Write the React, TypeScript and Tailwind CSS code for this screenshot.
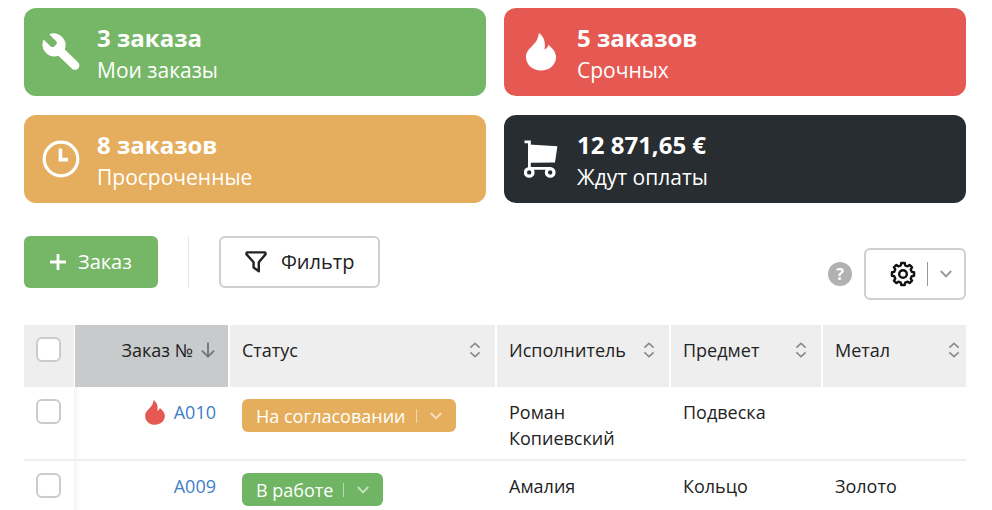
import React, { useState } from "react";
import clsx from "clsx";

interface Order {
  id: string;
  urgent: boolean;
  status: string;
  statusColor: string;
  assignee: string;
  item: string;
  metal: string;
}

const orders: Order[] = [
  {
    id: "A010",
    urgent: true,
    status: "На согласовании",
    statusColor: "bg-[#e5ae5c]",
    assignee: "Роман Копиевский",
    item: "Подвеска",
    metal: "",
  },
  {
    id: "A009",
    urgent: false,
    status: "В работе",
    statusColor: "bg-[#6fb563]",
    assignee: "Амалия",
    item: "Кольцо",
    metal: "Золото",
  },
];

function WrenchIcon() {
  return (
    <svg viewBox="0 0 38 38" className="size-[38px]" fill="currentColor">
      <path d="M7.2 1.2A12 12 0 0 1 22.8 16.4L36 29.2A4.2 4.2 0 0 1 30 35.7L16.4 22.8A12 12 0 0 1 1.6 6.4L8.8 13.4Q10.6 14.8 12.4 13.2L14.2 11.4Q15.6 9.8 14.2 8.2Z" />
    </svg>
  );
}

function FlameIcon({ className }: { className: string }) {
  return (
    <svg viewBox="0 0 30 38" className={className} fill="currentColor">
      <path d="M12.9 0C17.5 3.4 20 8.4 18.6 16.6C20.6 15.6 21.6 14 22.4 12C26.8 15.5 30 19.3 30 24C30 32 23.3 37.6 15 37.6C6.7 37.6 0 32 0 23.8C0 14.5 11.6 13 12.9 0Z" />
    </svg>
  );
}

function ClockIcon() {
  return (
    <svg viewBox="0 0 38 38" className="size-[38px]" fill="none" stroke="currentColor">
      <circle cx="19" cy="19" r="16.8" strokeWidth="3.2" />
      <path d="M18.4 8.6V19.6H26" strokeWidth="3.6" />
    </svg>
  );
}

function CartIcon() {
  return (
    <svg viewBox="0 0 34 38" className="h-[38px] w-[34px]" fill="none" stroke="currentColor">
      <path d="M0.5 1.8H5.4V28.4H27" strokeWidth="2.8" />
      <path d="M5 4.6L33.4 6.2L31 22.4L5 22.8Z" fill="currentColor" stroke="none" />
      <circle cx="5.2" cy="32.4" r="3.8" strokeWidth="3.2" />
      <circle cx="26.2" cy="32.4" r="3.8" strokeWidth="3.2" />
    </svg>
  );
}

function FilterIcon() {
  return (
    <svg
      viewBox="0 0 22 22"
      className="size-[22px]"
      fill="none"
      stroke="currentColor"
      strokeWidth="2.4"
      strokeLinejoin="round"
    >
      <path d="M2.4 1.4H19.6Q21.2 1.8 20.4 3.4L13.8 11.2V20.2L8.6 16.6V11.2L1.6 3.4Q0.8 1.8 2.4 1.4Z" />
    </svg>
  );
}

// Eight teeth, two outer and two inner points for each
function GearIcon() {
  const points: string[] = [];
  for (let i = 0; i < 8; i++) {
    const teeth = [
      [-14, 9],
      [-9, 11.2],
      [9, 11.2],
      [14, 9],
    ];
    teeth.forEach(([offset, radius]) => {
      const angle = ((i * 45 + offset) * Math.PI) / 180;
      points.push(
        `${(13 + radius * Math.sin(angle)).toFixed(2)},${(13 - radius * Math.cos(angle)).toFixed(2)}`
      );
    });
  }
  return (
    <svg
      viewBox="0 0 26 26"
      className="size-[26px]"
      fill="none"
      stroke="currentColor"
      strokeWidth="2.4"
      strokeLinejoin="round"
    >
      <polygon points={points.join(" ")} />
      <circle cx="13" cy="13" r="3.8" />
    </svg>
  );
}

function ChevronIcon() {
  return (
    <svg viewBox="0 0 12 8" className="h-2 w-3" fill="none" stroke="currentColor" strokeWidth="2">
      <path d="M0.8 1L6 6.4L11.2 1" />
    </svg>
  );
}

function SortIcon() {
  return (
    <svg viewBox="0 0 12 16" className="h-4 w-3" fill="none" stroke="#8a8a8a" strokeWidth="1.6">
      <path d="M1.4 5.6L6 1.4L10.6 5.6M1.4 10.4L6 14.6L10.6 10.4" />
    </svg>
  );
}

const stats = [
  { title: "3 заказа", label: "Мои заказы", color: "bg-[#75b667]", icon: <WrenchIcon /> },
  {
    title: "5 заказов",
    label: "Срочных",
    color: "bg-[#e65953]",
    icon: <FlameIcon className="h-[38px] w-[30px]" />,
  },
  { title: "8 заказов", label: "Просроченные", color: "bg-[#e5ae5e]", icon: <ClockIcon /> },
  { title: "12 871,65 €", label: "Ждут оплаты", color: "bg-[#272d30]", icon: <CartIcon /> },
];

function Checkbox({ label }: { label: string }) {
  return (
    <input
      type="checkbox"
      aria-label={label}
      className="block size-[25px] appearance-none rounded-md border-2 border-[#cbcbcb] bg-white checked:bg-[#75b667]"
    />
  );
}

function SortHeader({ title, last }: { title: string; last?: boolean }) {
  return (
    <th
      className={clsx(
        "border-l-2 border-white bg-[#eeeeee] pt-3 pl-3 align-top font-normal",
        last ? "pr-[6px]" : "pr-[14px]"
      )}
    >
      <button className="flex w-full items-center justify-between">
        {title}
        <SortIcon />
      </button>
    </th>
  );
}

export default function App() {
  const [descending, setDescending] = useState(true);

  return (
    <div className="bg-white pt-2 pr-[26px] pl-6 font-['Open_Sans',sans-serif] text-[#222222]">
      {/* Order counters */}
      <div className="grid grid-cols-2 gap-x-[18px] gap-y-[19px]">
        {stats.map((stat) => (
          <a
            href="#orders"
            key={stat.title}
            className={clsx("flex h-[88px] items-center rounded-xl text-white", stat.color)}
          >
            <span className="flex w-[73px] justify-center">{stat.icon}</span>
            <span className="pt-[3px]">
              <span className="block text-2xl/8 font-bold">{stat.title}</span>
              <span className="block text-[21px]/8">{stat.label}</span>
            </span>
          </a>
        ))}
      </div>

      {/* Toolbar */}
      <div className="mt-[33px] mb-[25px] flex h-16 justify-between">
        <div className="flex h-[52px] items-center">
          <button className="flex h-full items-center gap-3 rounded-md bg-[#75b667] px-[26px] text-xl font-medium text-white">
            <svg viewBox="0 0 16 16" className="size-4" stroke="currentColor" strokeWidth="2.8">
              <path d="M8 0.8V15.2M0.8 8H15.2" strokeLinecap="round" />
            </svg>
            Заказ
          </button>
          <div className="mx-[30px] h-full w-px bg-[#e6e6e6]" />
          <button className="flex h-full items-center gap-[14px] rounded-md border-2 border-[#cfcfcf] px-6 text-xl">
            <FilterIcon />
            Фильтр
          </button>
        </div>
        <div className="flex h-[52px] items-center gap-3 self-end">
          <button
            aria-label="Справка"
            className="size-6 rounded-full bg-[#b1b1b1] text-base/6 font-bold text-white"
          >
            ?
          </button>
          <div className="flex h-full items-center rounded-md border-2 border-[#cfcfcf] pr-3 pl-6">
            <button aria-label="Настройки" className="text-[#111111]">
              <GearIcon />
            </button>
            <div className="mr-3 ml-[11px] h-6 w-px bg-[#999999]" />
            <button aria-label="Ещё" className="text-[#999999]">
              <ChevronIcon />
            </button>
          </div>
        </div>
      </div>

      {/* Orders */}
      <table id="orders" className="w-full table-fixed text-left text-lg/[26px]">
        <colgroup>
          <col className="w-[50px]" />
          <col className="w-[155px]" />
          <col />
          <col className="w-[174px]" />
          <col className="w-[152px]" />
          <col className="w-[144px]" />
        </colgroup>
        <thead>
          <tr className="h-[62px]">
            <th className="bg-[#eeeeee] pt-3 pl-3 align-top">
              <Checkbox label="Выбрать все заказы" />
            </th>
            <th className="border-l border-white bg-[#c8cbcc] pt-3 pr-[13px] align-top font-normal">
              <button
                className="ml-auto flex items-center gap-2"
                onClick={() => setDescending(!descending)}
              >
                Заказ №
                <svg
                  viewBox="0 0 14 16"
                  className={clsx("h-4 w-[14px]", !descending && "rotate-180")}
                  fill="none"
                  stroke="#777777"
                  strokeWidth="1.9"
                >
                  <path d="M7 0.5V14.4M0.9 8.6L7 14.6L13.1 8.6" />
                </svg>
              </button>
            </th>
            <SortHeader title="Статус" />
            <SortHeader title="Исполнитель" />
            <SortHeader title="Предмет" />
            <SortHeader title="Метал" last />
          </tr>
        </thead>
        <tbody>
          {orders.map((order) => (
            <tr key={order.id} className="border-b-2 border-[#eeeeee] align-top last:border-b-0">
              <td className="pt-3 pl-3">
                <Checkbox label={`Выбрать заказ ${order.id}`} />
              </td>
              <td className="bg-linear-to-r from-[#f4f4f4] to-white to-[6px] pt-3 pr-[13px]">
                <div className="flex items-center justify-end gap-[9px]">
                  {order.urgent && <FlameIcon className="h-[25px] w-5 text-[#e65953]" />}
                  <a href={`#${order.id}`} className="text-[#4080c8]">
                    {order.id}
                  </a>
                </div>
              </td>
              <td className="pt-3 pb-2 pl-[13px]">
                <button
                  className={clsx(
                    "flex h-[33px] items-center rounded-md px-[14px] font-medium text-white",
                    order.statusColor
                  )}
                >
                  {order.status}
                  <span className="mr-[13px] ml-[10px] h-[14px] w-px bg-white/50" />
                  <span className="text-white/60">
                    <ChevronIcon />
                  </span>
                </button>
              </td>
              <td className="pt-3 pb-2 pl-[13px]">{order.assignee}</td>
              <td className="pt-3 pl-[13px]">{order.item}</td>
              <td className="pt-3 pl-[13px]">{order.metal}</td>
            </tr>
          ))}
        </tbody>
      </table>
    </div>
  );
}
